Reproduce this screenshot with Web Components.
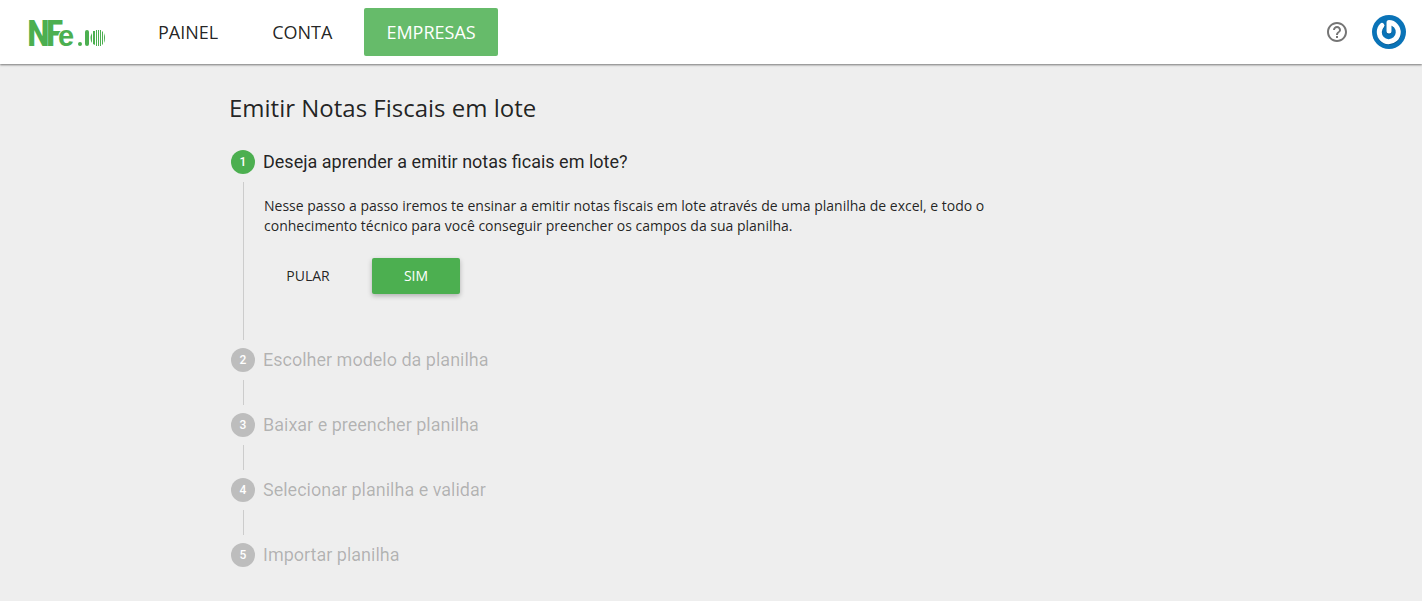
<!DOCTYPE html>
<html lang="pt-BR">
<head>
<meta charset="utf-8">
<meta name="viewport" content="width=device-width, initial-scale=1">
<title>Emitir Notas Fiscais em lote</title>
<style>
body{margin:0;background:#eee;color:rgba(0,0,0,.87);font-family:"Open Sans",sans-serif;font-size:14px;line-height:20px}
</style>
</head>
<body>
<nfe-app></nfe-app>

<template id="t-app">
<style>
:host{display:block}
main{box-sizing:border-box;width:100%;max-width:964px;margin:0 auto;padding:26px 0}
h1{margin:0;font-size:24px;font-weight:400;line-height:36px}
p{margin:0;max-width:740px}
.actions{display:flex;gap:20px;margin-top:22px}
</style>
<nfe-toolbar></nfe-toolbar>
<main>
<h1>Emitir Notas Fiscais em lote</h1>
<nfe-steps>
<nfe-step number="1" active><span slot="title">Deseja aprender a emitir notas ficais em lote?</span>
<p>Nesse passo a passo iremos te ensinar a emitir notas fiscais em lote através de uma planilha de excel, e todo o conhecimento técnico para você conseguir preencher os campos da sua planilha.</p>
<div class="actions"><nfe-button>PULAR</nfe-button><nfe-button raised>SIM</nfe-button></div>
</nfe-step>
<nfe-step number="2"><span slot="title">Escolher modelo da planilha</span></nfe-step>
<nfe-step number="3"><span slot="title">Baixar e preencher planilha</span></nfe-step>
<nfe-step number="4"><span slot="title">Selecionar planilha e validar</span></nfe-step>
<nfe-step number="5"><span slot="title">Importar planilha</span></nfe-step>
</nfe-steps>
</main>
</template>

<template id="t-toolbar">
<style>
:host{display:block;background:#fff;box-shadow:0 1px 2px rgba(0,0,0,.5)}
header{display:flex;align-items:center;height:64px;padding:0 16px 0 28px}
.logo{display:block;text-decoration:none}
nav{display:flex;flex:1;gap:10px;margin-left:30px}
nav a{padding:0 22px;line-height:48px;font-size:18px;font-weight:400;color:inherit;text-decoration:none;border-radius:2px}
nav a[aria-current]{background:#66bb6a;color:#fff;font-weight:500}
button{display:block;border:0;padding:0;background:none;cursor:pointer}
.help{margin-right:23px}
svg{display:block}
</style>
<header>
<a class="logo" href="#" aria-label="NFe.io"><svg width="78" height="64" viewBox="0 0 78 64" fill="#4caf50">
<text x="-1" y="46" font-family="'Roboto Condensed',Roboto,sans-serif" font-weight="700" font-size="37">N<tspan dx="-4">F</tspan></text>
<text x="30" y="46" font-family="'Liberation Sans',sans-serif" font-weight="700" font-size="29" stroke="#fff" stroke-width="2" paint-order="stroke">e</text>
<circle cx="52" cy="44" r="2"/>
<rect x="57" y="30" width="4" height="16" rx="2"/><path d="M64 33q-3 5 0 10zM65 31h2v14l-2-1zM68 30h1v16h-1zM70 30h1v16h-1zM72 30h1v16h-1zM74 31l1 1v12l-1 1zM76 33q2 5 0 10z"/>
</svg></a>
<nav aria-label="Principal"><a href="#painel">PAINEL</a><a href="#conta">CONTA</a><a href="#empresas" aria-current="page">EMPRESAS</a></nav>
<button class="help" aria-label="Ajuda"><svg width="24" height="24" viewBox="0 0 24 24" fill="#757575"><path d="M11 18h2v-2h-2v2zm1-16C6.480 2 2 6.480 2 12s4.480 10 10 10 10-4.480 10-10S17.520 2 12 2zm0 18c-4.410 0-8-3.590-8-8s3.590-8 8-8 8 3.590 8 8-3.590 8-8 8zm0-14c-2.210 0-4 1.790-4 4h2c0-1.100.9-2 2-2s2 .9 2 2c0 2-3 1.750-3 5h2c0-2.250 3-2.500 3-5 0-2.210-1.790-4-4-4z"/></svg></button>
<button aria-label="Perfil"><svg width="34" height="34" viewBox="0 0 34 34"><circle cx="17" cy="17" r="17" fill="#0a73b7"/><g fill="none" stroke-linecap="round" stroke-linejoin="round" stroke-width="5"><path stroke="#07558a" d="M10.500 11a9.500 9.500 0 1 0 14 1q-3-4-7.500-4v9"/><path stroke="#fff" d="M10 10.500a9.500 9.500 0 1 0 14 .5q-3-3.500-7-3.500v8.500"/></g></svg></button>
</header>
</template>

<template id="t-steps">
<style>:host{display:block;margin-top:24px}</style>
<slot></slot>
</template>

<template id="t-step">
<style>
:host{display:block;color:rgba(0,0,0,.26)}
:host([active]){color:rgba(0,0,0,.87)}
h2{display:flex;align-items:center;gap:8px;margin:0;padding-left:2px;font:400 18px/24px Roboto,sans-serif}
.num{width:24px;border-radius:50%;background:#bdbdbd;color:#fff;text-align:center;font-size:12px;font-weight:500}
:host([active]) .num{background:#4caf50}
.body{box-sizing:border-box;min-height:25px;margin:8px 0 8px 14px;padding-left:20px;border-left:1px solid #ccc}
:host([active]) .body{padding-top:14px;padding-bottom:46px}
:host(:last-of-type) .body{display:none}
</style>
<h2><span class="num"></span><slot name="title"></slot></h2>
<div class="body"><slot></slot></div>
</template>

<template id="t-button">
<style>
:host{display:block}
button{display:block;min-width:88px;height:36px;border:0;border-radius:2px;padding:0 16px;background:none;color:inherit;font:inherit;cursor:pointer}
:host([raised]) button{background:#4caf50;color:#fff;font-weight:500;box-shadow:0 2px 5px rgba(0,0,0,.26)}
</style>
<button type="button"><slot></slot></button>
</template>

<script>
class Base extends HTMLElement{
  constructor(){
    super();
    this.attachShadow({mode:"open"}).append(document.getElementById(this.constructor.template).content.cloneNode(true));
  }
}
class NfeButton extends Base{static template="t-button"}
class NfeStep extends Base{
  static template="t-step";
  connectedCallback(){this.shadowRoot.querySelector(".num").textContent=this.getAttribute("number")}
}
class NfeSteps extends Base{static template="t-steps"}
class NfeToolbar extends Base{static template="t-toolbar"}
class NfeApp extends Base{static template="t-app"}
customElements.define("nfe-button",NfeButton);
customElements.define("nfe-step",NfeStep);
customElements.define("nfe-steps",NfeSteps);
customElements.define("nfe-toolbar",NfeToolbar);
customElements.define("nfe-app",NfeApp);
</script>
</body>
</html>
